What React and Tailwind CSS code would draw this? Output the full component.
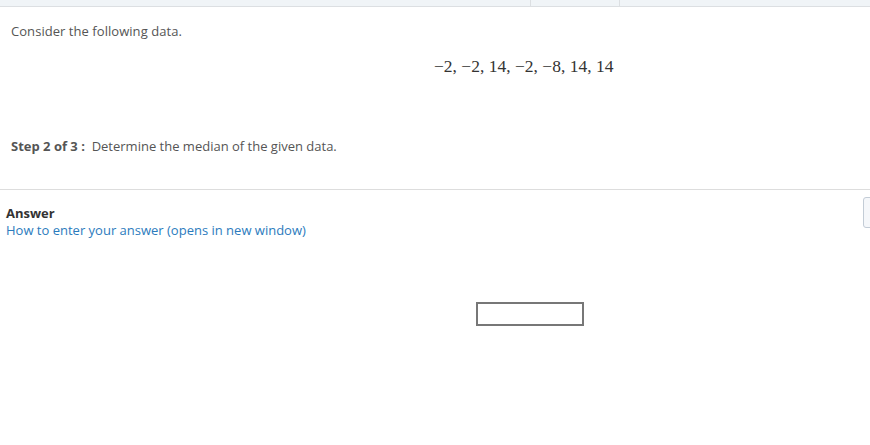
export default function App() {
  return (
    <div className="relative h-[445px] w-[870px] overflow-hidden bg-white font-['Open_Sans',sans-serif] text-[13px] text-[#555]">
      <div className="flex h-[7px] border-b border-[#dcdfe2] bg-[#f0f4f7]">
        <div className="w-[530px]" />
        <div className="w-[89px] border-l border-[#dcdfe2]" />
        <div className="flex-1 border-l border-[#dcdfe2]" />
      </div>

      <div className="px-[11px] pt-[15px]">
        <p className="leading-[18px] tracking-[0.05px]">Consider the following data.</p>
        <div className="mt-[16px] flex pl-[423px]">
          <span className="font-['Liberation_Serif',serif] text-[17.5px] leading-[20px] text-[#333]">
            −2, −2, 14, −2, −8, 14, 14
          </span>
        </div>
        <p className="mt-[61px] leading-[18px]">
          <b className="font-bold text-[#555]">Step 2 of 3&nbsp;:</b>
          &nbsp; Determine the median of the given data.
        </p>
      </div>

      <div className="mt-[34px] border-t border-[#ddd]">
        <div className="flex justify-between">
          <div className="px-[6px] pt-[15px]">
            <p className="font-bold leading-[17px] text-[#333]">Answer</p>
            <a className="block leading-[16px] text-[#2b7bbd]">
              How to enter your answer (opens in new window)
            </a>
          </div>
          <div className="mr-[-8px] mt-[7px] h-[31px] w-[15px] rounded-[3px] border border-[#c3ccd6] bg-[#f5f7fa]" />
        </div>
        <div className="mt-[64px] flex pl-[476px]">
          <div className="h-[24px] w-[108px] border-2 border-[#777] bg-white" />
        </div>
      </div>
    </div>
  );
}
